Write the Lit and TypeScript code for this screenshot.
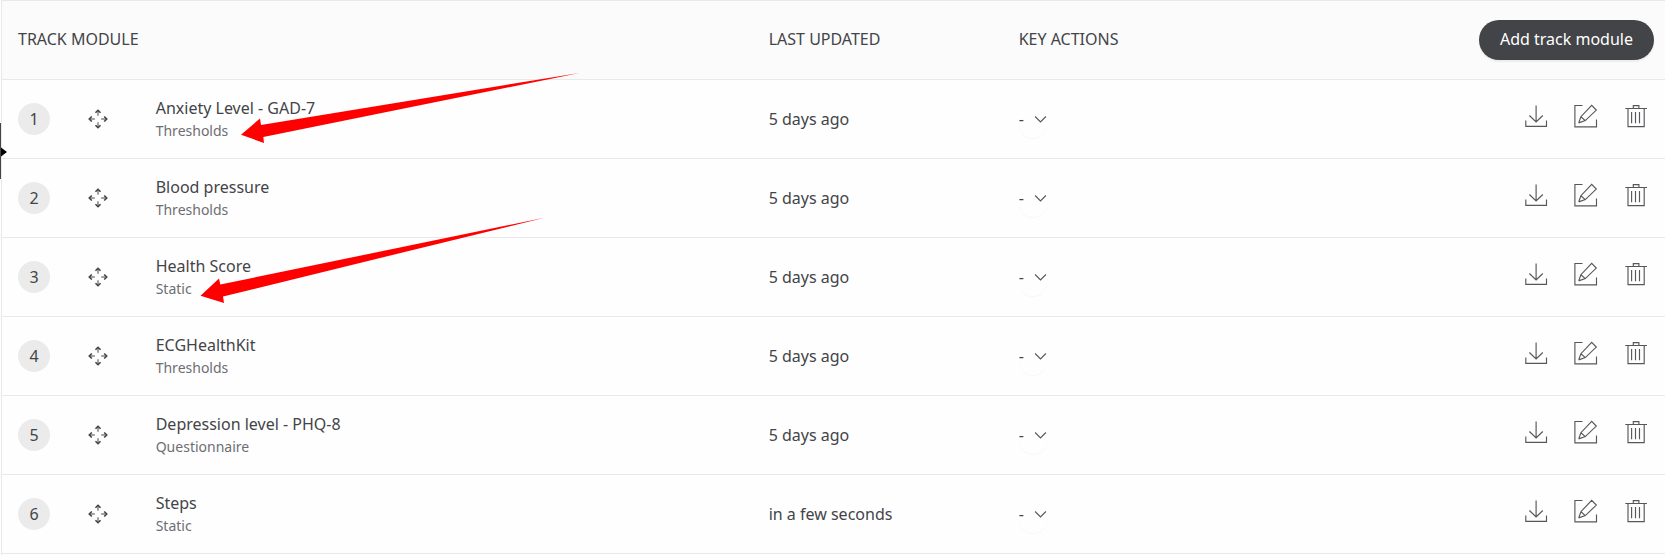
import { LitElement, html, svg, css } from "lit";
import { customElement, property } from "lit/decorators.js";

interface TrackModule {
  name: string;
  kind: string;
  updated: string;
}

const MODULES: TrackModule[] = [
  { name: "Anxiety Level - GAD-7", kind: "Thresholds", updated: "5 days ago" },
  { name: "Blood pressure", kind: "Thresholds", updated: "5 days ago" },
  { name: "Health Score", kind: "Static", updated: "5 days ago" },
  { name: "ECGHealthKit", kind: "Thresholds", updated: "5 days ago" },
  { name: "Depression level - PHQ-8", kind: "Questionnaire", updated: "5 days ago" },
  { name: "Steps", kind: "Static", updated: "in a few seconds" },
];

// One arm of the move handle, rotated to the four directions.
const moveArm = (angle: number) => svg`
  <g transform="rotate(${angle} 9.5 9.5)">
    <path class="stem" d="M9.5 2V6.5"/>
    <path class="head" d="M7.1 3.6L9.5 1.2L11.9 3.6"/>
  </g>`;

@customElement("track-row")
export class TrackRow extends LitElement {
  @property({ type: Object }) module!: TrackModule;
  @property({ type: Number }) index = 1;

  static styles = css`
    :host {
      display: grid;
      grid-template-columns: 64px 73.7px 613px 250px 1fr;
      align-items: center;
      height: 78px;
      padding: 0 17px 0 16px;
      border-bottom: 1px solid #e9e9e9;
      background: #fefefe;
    }
    .number {
      display: flex;
      align-items: center;
      justify-content: center;
      width: 32px;
      height: 32px;
      border-radius: 50%;
      background: #ebebeb;
    }
    .move {
      display: block;
      width: 20px;
      height: 20px;
      margin-left: 6px;
      fill: none;
    }
    .stem { stroke: #8a8b8d; stroke-width: 1.5; }
    .head { stroke: #434448; stroke-width: 1.5; }
    .text { padding-bottom: 2px; }
    .name { line-height: 24px; }
    .kind { font-size: 14px; line-height: 21px; color: #6d6e73; }
    .actions { display: flex; align-items: center; justify-content: space-between; }
    .key { display: flex; align-items: center; position: relative; }
    .key::before {
      content: "";
      position: absolute;
      left: 0;
      top: 3px;
      width: 28px;
      height: 28px;
      border-radius: 50%;
      box-shadow: 0 1px 1px rgba(0, 0, 0, 0.03);
      clip-path: inset(12px -3px -3px -3px);
    }
    .chevron { width: 13px; height: 9px; margin-left: 10.3px; fill: none; stroke: #55565a; stroke-width: 1.1; }
    .tools { display: flex; align-items: center; gap: 26px; margin-top: -6px; }
    .tool { display: block; width: 24px; height: 24px; fill: none; stroke: #56575a; stroke-width: 1.15; }
  `;

  render() {
    return html`
      <div class="number">${this.index}</div>
      <svg class="move" viewBox="0 0 19 19">${[0, 90, 180, 270].map(moveArm)}</svg>
      <div class="text">
        <div class="name">${this.module.name}</div>
        <div class="kind">${this.module.kind}</div>
      </div>
      <div>${this.module.updated}</div>
      <div class="actions">
        <div class="key">
          <span>-</span>
          <svg class="chevron" viewBox="0 0 13 9"><path d="M1.1 1.5L6.5 6.9L11.9 1.5"/></svg>
        </div>
        <div class="tools">
          <svg class="tool" viewBox="0 0 24 24">
            <path d="M12.1 1.5V17.8M5.4 11.5L12.1 18L18.8 11.5M1.8 16.5V22.3H22.5V16.5"/>
          </svg>
          <svg class="tool" viewBox="0 0 24 24">
            <path d="M8.5 1.5H0.9V22.8H22.5V15.5M4.7 18.9L6.9 12.7L17.7 1.3L22.3 6.1L11.3 16.6L4.7 18.9M6.9 12.7L11.3 16.6"/>
          </svg>
          <svg class="tool" viewBox="0 0 24 24">
            <path d="M1.3 4.5H23M9.3 4V1.6H14.9V4M4 5V22.6H20.2V5M7.6 8V19.3M11.5 8V19.3M15.5 8V19.3"/>
          </svg>
        </div>
      </div>
    `;
  }
}

@customElement("app-root")
export class AppRoot extends LitElement {
  static styles = css`
    :host {
      display: block;
      position: relative;
      box-sizing: border-box;
      height: 555px;
      padding-left: 1px;
      overflow: hidden;
      background: #fefefe;
      color: #434448;
      font: 16px/24px "Noto Sans", sans-serif;
    }
    .table {
      box-sizing: border-box;
      height: 555px;
      border-left: 1px solid #e9e9e9;
      border-top: 1px solid #e9e9e9;
    }
    .header {
      display: grid;
      grid-template-columns: 750.7px 250px 1fr auto;
      align-items: center;
      height: 78px;
      padding: 0 11px 0 16px;
      border-bottom: 1px solid #e9e9e9;
      background: #fbfbfb;
    }
    .label { padding-bottom: 2px; }
    .add {
      height: 40px;
      padding: 0 21px 2px;
      border: 0;
      border-radius: 20px;
      background: #434448;
      color: #fff;
      font: inherit;
      box-shadow: 0 2px 2px rgba(0, 0, 0, 0.06);
    }
    .handle {
      position: absolute;
      left: 0;
      top: 123px;
      width: 7px;
      height: 56px;
    }
    .marks {
      position: absolute;
      left: 0;
      top: 0;
      width: 1665px;
      height: 555px;
      pointer-events: none;
      fill: #ff0000;
    }
  `;

  render() {
    return html`
      <div class="table">
        <div class="header">
          <div class="label">TRACK MODULE</div>
          <div class="label">LAST UPDATED</div>
          <div class="label">KEY ACTIONS</div>
          <button class="add">Add track module</button>
        </div>
        ${MODULES.map((m, i) => html`<track-row .module=${m} .index=${i + 1}></track-row>`)}
      </div>
      <svg class="handle" viewBox="0 0 7 56">
        <path d="M0 0H1V56H0Z" fill="#434448"/>
        <path d="M1 24.5L7 29L1 33.5Z" fill="#000"/>
      </svg>
      <svg class="marks" viewBox="0 0 1665 555">
        <path d="M241 134.7L260 118.5L261 125L579.5 72.9L263.3 137L264 143Z"/>
        <path d="M200.5 295.7L219 278.5L220.3 284.5L544.5 217.7L223 296.5L224 303Z"/>
      </svg>
    `;
  }
}
